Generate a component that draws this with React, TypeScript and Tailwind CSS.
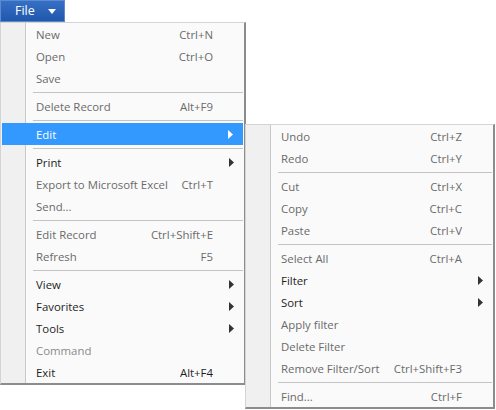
import React from 'react';

type Item =
  | { sep: true }
  | {
      sep?: false;
      label: string;
      shortcut?: string;
      sub?: boolean;
      tone?: 'dark' | 'dim' | 'off';
      active?: boolean;
    };

const fileItems: Item[] = [
  { label: 'New', shortcut: 'Ctrl+N' },
  { label: 'Open', shortcut: 'Ctrl+O' },
  { label: 'Save' },
  { sep: true },
  { label: 'Delete Record', shortcut: 'Alt+F9' },
  { sep: true },
  { label: 'Edit', sub: true, active: true },
  { sep: true },
  { label: 'Print', sub: true, tone: 'dark' },
  { label: 'Export to Microsoft Excel', shortcut: 'Ctrl+T' },
  { label: 'Send...' },
  { sep: true },
  { label: 'Edit Record', shortcut: 'Ctrl+Shift+E' },
  { label: 'Refresh', shortcut: 'F5' },
  { sep: true },
  { label: 'View', sub: true, tone: 'dark' },
  { label: 'Favorites', sub: true, tone: 'dark' },
  { label: 'Tools', sub: true, tone: 'dark' },
  { label: 'Command', tone: 'off' },
  { label: 'Exit', shortcut: 'Alt+F4', tone: 'dark' },
];

const editItems: Item[] = [
  { label: 'Undo', shortcut: 'Ctrl+Z' },
  { label: 'Redo', shortcut: 'Ctrl+Y' },
  { sep: true },
  { label: 'Cut', shortcut: 'Ctrl+X' },
  { label: 'Copy', shortcut: 'Ctrl+C' },
  { label: 'Paste', shortcut: 'Ctrl+V' },
  { sep: true },
  { label: 'Select All', shortcut: 'Ctrl+A' },
  { label: 'Filter', sub: true, tone: 'dark' },
  { label: 'Sort', sub: true, tone: 'dark' },
  { label: 'Apply filter' },
  { label: 'Delete Filter' },
  { label: 'Remove Filter/Sort', shortcut: 'Ctrl+Shift+F3' },
  { sep: true },
  { label: 'Find...', shortcut: 'Ctrl+F' },
];

function Arrow({ white }: { white?: boolean }) {
  return (
    <svg width="5" height="9" viewBox="0 0 5 9" className="shrink-0">
      <path d="M0 0 L5 4.5 L0 9 Z" fill={white ? '#ffffff' : '#333333'} />
    </svg>
  );
}

function MenuPanel({ items, width }: { items: Item[]; width: string }) {
  return (
    <div
      className={`relative ${width} border-l border-t border-l-[#d4d4d4] border-t-[#d4d4d4] border-r-2 border-b-2 border-r-[#8c8c8c] border-b-[#8c8c8c] bg-[#fafafa]`}
    >
      {/* icon gutter */}
      <div className="pointer-events-none absolute bottom-0 left-0 top-0 w-[25px] border-r border-r-[#c8c8c8] bg-[#f0f0f0]" />
      <div className="relative flex flex-col">
        {items.map((it, i) => {
          if (it.sep) {
            return (
              <div key={i} className="flex h-[6px] items-center pl-[32px] pr-[1px]">
                <div className="h-px w-full bg-[#c4c4c4]" />
              </div>
            );
          }
          const color = it.active
            ? 'text-white'
            : it.tone === 'dark'
              ? 'text-[#1e1e1e]'
              : it.tone === 'off'
                ? 'text-[#8a8a8a]'
                : 'text-[#6a6a6a]';
          return (
            <div
              key={i}
              className={`flex h-[22px] items-center pt-[1px] pr-[10px] ${color} ${
                it.active ? 'mx-[1px] bg-[#3399ff] pl-[34px]' : 'pl-[35px]'
              }`}
            >
              <span className="flex-1 whitespace-nowrap">{it.label}</span>
              {it.shortcut && (
                <span className="mr-[21px] whitespace-nowrap">{it.shortcut}</span>
              )}
              {it.sub && <Arrow white={it.active} />}
            </div>
          );
        })}
      </div>
    </div>
  );
}

export default function App() {
  return (
    <div
      className="relative h-[410px] w-[496px] overflow-hidden bg-white text-[11.4px] leading-none"
      style={{ fontFamily: '"Open Sans", "Noto Sans", sans-serif' }}
    >
      <div className="flex h-[22px] w-[65px] items-center gap-[13px] border border-[#5b8ad0] bg-gradient-to-b from-[#3670c4] to-[#1f57ac] pl-[14px] text-[12.5px] text-white">
        <span>File</span>
        <svg width="8" height="5" viewBox="0 0 8 5">
          <path d="M0 0 L8 0 L4 5 Z" fill="#ffffff" />
        </svg>
      </div>
      <MenuPanel items={fileItems} width="w-[246px]" />
      <div className="absolute left-[245px] top-[124px]">
        <MenuPanel items={editItems} width="w-[250px]" />
      </div>
    </div>
  );
}
